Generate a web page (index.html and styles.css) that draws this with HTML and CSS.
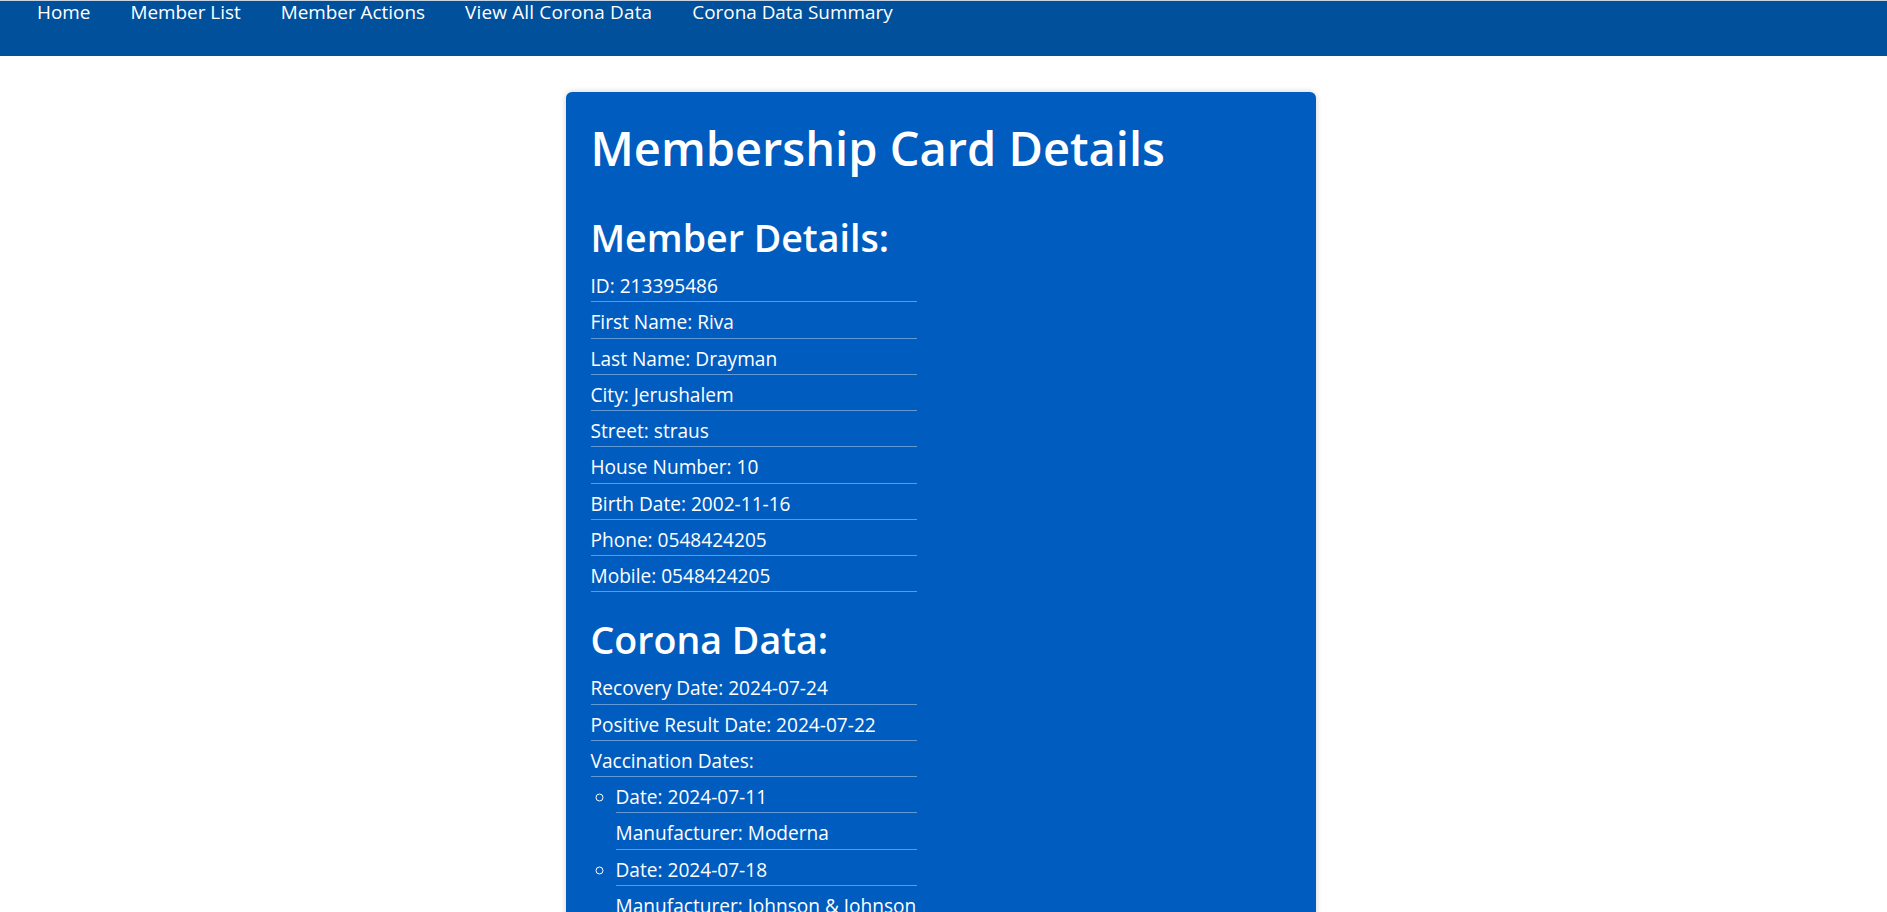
FILE: index.html
```html
<!DOCTYPE html>
<html lang="en">
<head>
<meta charset="utf-8">
<title>Membership Card Details</title>
<link rel="stylesheet" href="styles.css">
</head>
<body>
<nav class="navbar">
  <ul class="nav-links">
    <li><a href="#">Home</a></li>
    <li><a href="#">Member List</a></li>
    <li><a href="#">Member Actions</a></li>
    <li><a href="#" class="wide">View All Corona Data</a></li>
    <li><a href="#">Corona Data Summary</a></li>
  </ul>
</nav>
<main class="card">
  <h1 class="card-title">Membership Card Details</h1>
  <h2 class="section-title">Member Details:</h2>
  <ul class="details">
    <li>ID: 213395486</li>
    <li>First Name: Riva</li>
    <li>Last Name: Drayman</li>
    <li>City: Jerushalem</li>
    <li>Street: straus</li>
    <li>House Number: 10</li>
    <li>Birth Date: 2002-11-16</li>
    <li>Phone: 0548424205</li>
    <li>Mobile: 0548424205</li>
  </ul>
  <h2 class="section-title corona">Corona Data:</h2>
  <ul class="details">
    <li>Recovery Date: 2024-07-24</li>
    <li>Positive Result Date: 2024-07-22</li>
    <li>Vaccination Dates:</li>
  </ul>
  <ul class="vaccines">
    <li>
      <div class="row">Date: 2024-07-11</div>
      <div class="row">Manufacturer: Moderna</div>
    </li>
    <li>
      <div class="row">Date: 2024-07-18</div>
      <div class="row">Manufacturer: Johnson &amp; Johnson</div>
    </li>
    <li>
      <div class="row">Date: 2024-07-25</div>
      <div class="row">Manufacturer: Pfizer</div>
    </li>
  </ul>
</main>
</body>
</html>
```

FILE: styles.css
```css
html, body {
  margin: 0;
  padding: 0;
  background: #ffffff;
}

body {
  font-family: "Open Sans", "Noto Sans", "Liberation Sans", sans-serif;
  color: #ffffff;
  overflow: hidden;
}

.navbar {
  background: #00509c;
  border-top: 1px solid #c9d4e2;
  height: 55px;
}

.nav-links {
  list-style: none;
  margin: 0;
  padding: 0 0 0 17px;
  display: flex;
}

.nav-links a {
  display: block;
  padding: 0 20px;
  color: #ffffff;
  text-decoration: none;
  font-size: 18.9px;
  line-height: 23px;
}

.nav-links a.wide {
  letter-spacing: 0.2px;
}

.card {
  display: block;
  width: 700px;
  margin: 36px 0 0 calc(50% - 378px);
  padding: 26px 25px 40px;
  background: #005cbf;
  border-radius: 6px;
  box-shadow: 0 0 6px rgba(0, 0, 0, 0.18);
  min-height: 900px;
}

.card-title {
  margin: 0;
  font-size: 47px;
  font-weight: 600;
  line-height: 60px;
}

.section-title {
  margin: 36px 0 5px;
  font-size: 37.6px;
  font-weight: 600;
  line-height: 47px;
}

.section-title.corona {
  margin-top: 24px;
}

.details,
.vaccines {
  margin: 0;
  padding: 0;
  font-size: 19.1px;
}

.details {
  list-style: none;
  width: 326px;
}

.details li,
.vaccines .row {
  padding: 7px 0 1px;
  line-height: 27.25px;
  border-bottom: 1px solid rgba(255, 255, 255, 0.38);
}

.vaccines {
  list-style: circle;
  padding-left: 25px;
  width: 301px;
}
```
